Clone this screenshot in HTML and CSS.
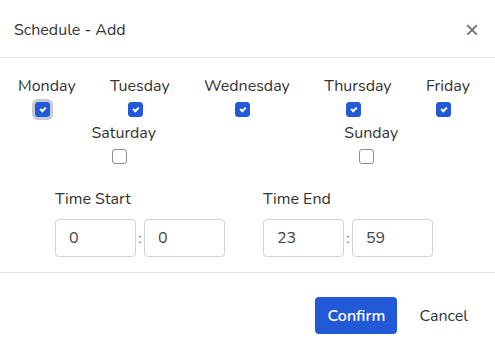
FILE: index.html
```html
<!DOCTYPE html>
<html lang="en">
<head>
    <meta charset="UTF-8">
    <meta name="viewport" content="width=device-width, initial-scale=1.0">
    <title>Schedule - Add</title>
    <link rel="stylesheet" href="styles.css">
</head>
<body>
    <div class="modal">
        <div class="modal-header">
            <h5 class="modal-title">Schedule - Add</h5>
            <button class="close" type="button">&times;</button>
        </div>
        <div class="modal-body">
            <div class="days days-week">
                <label class="day"><span>Monday</span><input type="checkbox" class="focused" checked></label>
                <label class="day"><span>Tuesday</span><input type="checkbox" checked></label>
                <label class="day"><span>Wednesday</span><input type="checkbox" checked></label>
                <label class="day"><span>Thursday</span><input type="checkbox" checked></label>
                <label class="day"><span>Friday</span><input type="checkbox" checked></label>
            </div>
            <div class="days days-weekend">
                <label class="day"><span>Saturday</span><input type="checkbox"></label>
                <label class="day"><span>Sunday</span><input type="checkbox"></label>
            </div>
            <div class="times">
                <div class="time-group">
                    <label>Time Start</label>
                    <div class="time-inputs">
                        <input type="text" value="0">
                        <span class="colon">:</span>
                        <input type="text" value="0">
                    </div>
                </div>
                <div class="time-group">
                    <label>Time End</label>
                    <div class="time-inputs">
                        <input type="text" value="23">
                        <span class="colon">:</span>
                        <input type="text" value="59">
                    </div>
                </div>
            </div>
        </div>
        <div class="modal-footer">
            <button class="btn-confirm" type="button">Confirm</button>
            <button class="btn-cancel" type="button">Cancel</button>
        </div>
    </div>
</body>
</html>
```

FILE: styles.css
```css
body, html {
    margin: 0;
    padding: 0;
    background-color: #ffffff;
    font-family: "Nunito", Lato, "Open Sans", sans-serif;
    color: #333333;
}
.modal {
    width: 495px;
    height: 350px;
    background-color: #ffffff;
}
.modal-header {
    display: flex;
    justify-content: space-between;
    align-items: center;
    height: 58px;
    padding: 2px 16px 0 14px;
    border-bottom: 1px solid #dee2e6;
    box-sizing: border-box;
}
.modal-title {
    margin: 0;
    font-size: 16px;
    font-weight: normal;
}
.close {
    background: none;
    border: none;
    padding: 0;
    font-size: 24px;
    line-height: 1;
    color: #707070;
    cursor: pointer;
    font-family: Arial, sans-serif;
}
.modal-body {
    padding: 18px 0 15px 0;
    border-bottom: 1px solid #dee2e6;
}
.days-week {
    display: flex;
    justify-content: space-between;
    padding: 0 25px 0 18px;
}
.days-weekend {
    display: grid;
    grid-template-columns: 1fr 1fr;
    margin-top: 6px;
}
.day {
    display: flex;
    flex-direction: column;
    align-items: center;
    font-size: 16px;
    line-height: 20px;
}
.day input {
    appearance: none;
    -webkit-appearance: none;
    width: 15px;
    height: 15px;
    margin: 6px 9px 0 0;
    border: 1px solid #8a8f98;
    border-radius: 3px;
    background-color: #ffffff;
    box-sizing: border-box;
    position: relative;
    cursor: pointer;
}
.day input:checked {
    background-color: #2159d6;
    border-color: #2159d6;
}
.day input:checked::after {
    content: "";
    position: absolute;
    left: 4px;
    top: 3.5px;
    width: 4px;
    height: 2px;
    border-left: 2px solid #ffffff;
    border-bottom: 2px solid #ffffff;
    transform: rotate(-45deg);
}
.day input.focused {
    box-shadow: 0 0 0 3px #c6cad1;
}
.times {
    display: flex;
    gap: 38px;
    padding: 0 0 0 55px;
    margin-top: 25px;
}
.time-group label {
    display: block;
    font-size: 16px;
    line-height: 20px;
    margin-bottom: 10px;
}
.time-inputs {
    display: flex;
    align-items: center;
}
.time-inputs input {
    width: 81px;
    height: 38px;
    box-sizing: border-box;
    border: 1px solid #ced4da;
    border-radius: 4px;
    padding: 0 13px;
    font-family: inherit;
    font-size: 16px;
    color: #444444;
}
.colon {
    width: 8px;
    text-align: center;
    font-size: 14px;
    color: #555555;
}
.modal-footer {
    display: flex;
    justify-content: flex-end;
    align-items: center;
    padding: 24px 27px 0 0;
}
.btn-confirm {
    width: 82px;
    height: 37px;
    background-color: #2159d6;
    color: #ffffff;
    border: none;
    border-radius: 4px;
    font-family: inherit;
    font-size: 16px;
    font-weight: 600;
    cursor: pointer;
}
.btn-cancel {
    background: none;
    border: none;
    margin-left: 22px;
    padding: 0;
    font-family: inherit;
    font-size: 16px;
    color: #333333;
    cursor: pointer;
}
```
